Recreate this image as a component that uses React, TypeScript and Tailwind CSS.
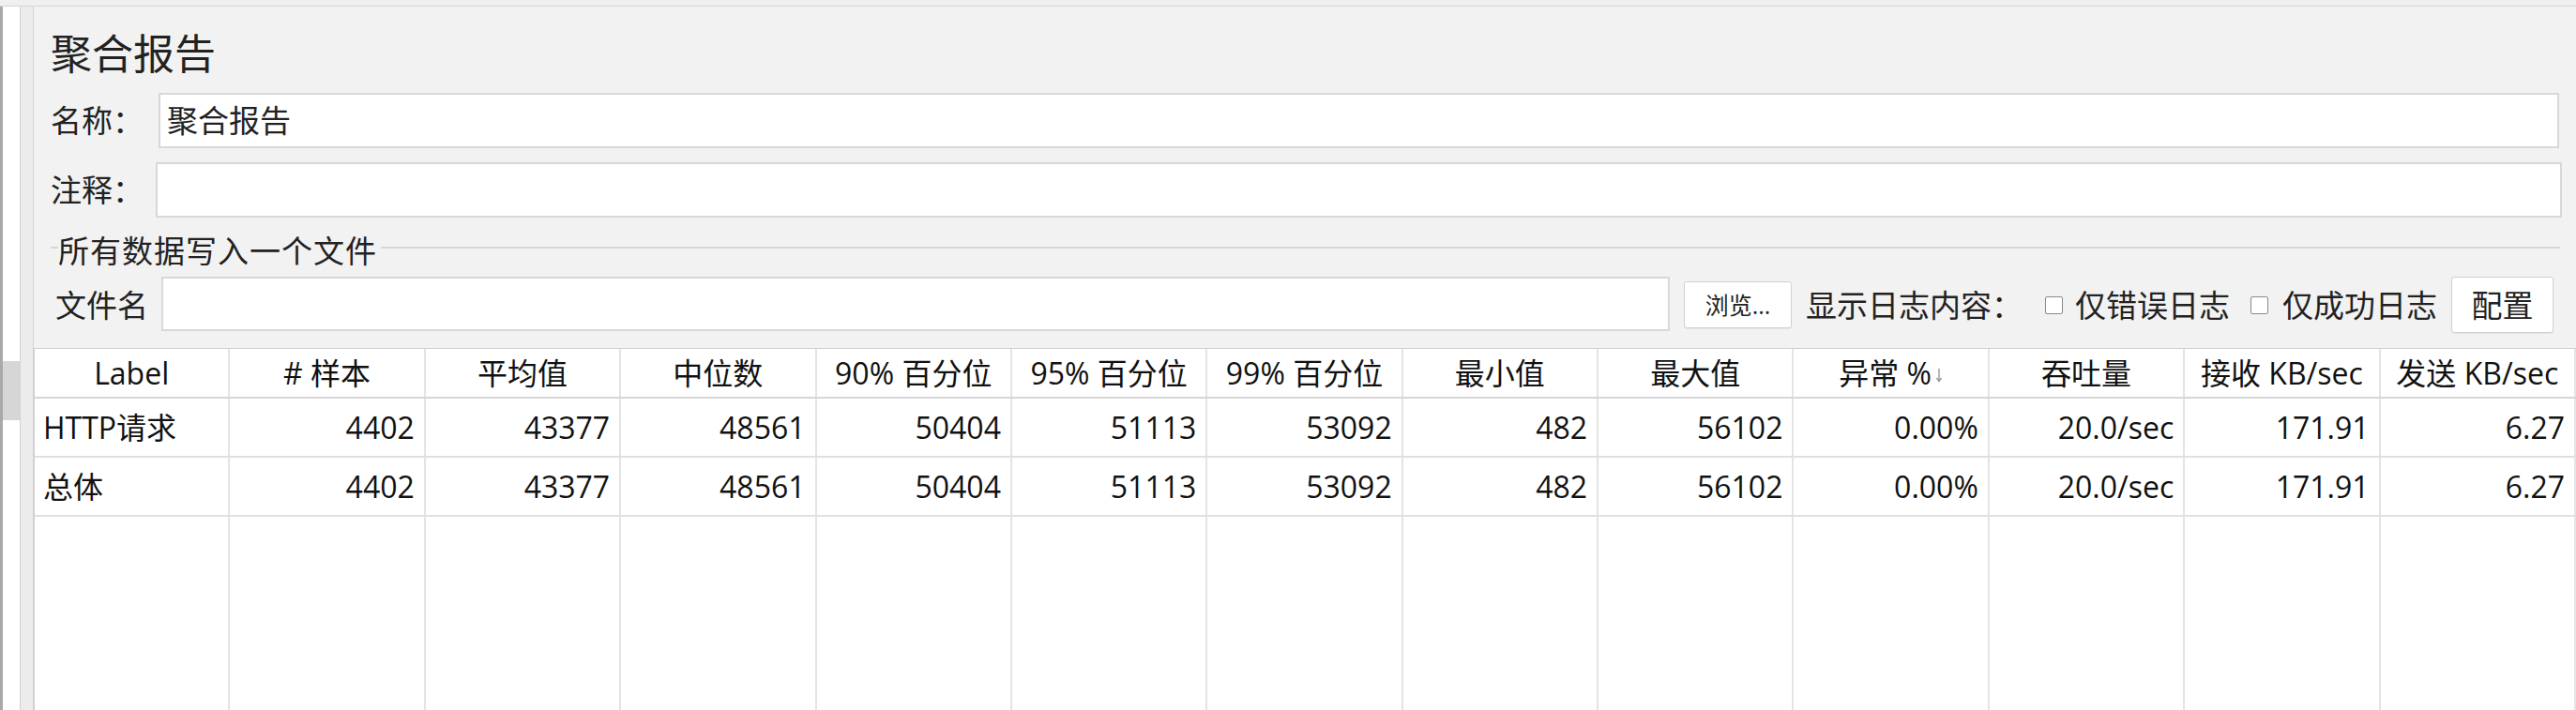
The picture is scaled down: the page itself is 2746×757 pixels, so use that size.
import React from 'react';

const headers = ['Label', '# 样本', '平均值', '中位数', '90% 百分位', '95% 百分位', '99% 百分位', '最小值', '最大值', '异常 %', '吞吐量', '接收 KB/sec', '发送 KB/sec'];

const rows = [
  ['HTTP请求', '4402', '43377', '48561', '50404', '51113', '53092', '482', '56102', '0.00%', '20.0/sec', '171.91', '6.27'],
  ['总体', '4402', '43377', '48561', '50404', '51113', '53092', '482', '56102', '0.00%', '20.0/sec', '171.91', '6.27'],
];

const Checkbox: React.FC = () => (
  <div className="h-[19px] w-[19px] shrink-0 rounded-[2px] border-[1.5px] border-[#8a8a8a] bg-white" />
);

export default function App() {
  return (
    <div className="flex h-[757px] w-[2746px] flex-col overflow-hidden bg-[#f0f0f0] font-['Open_Sans','Noto_Sans_CJK_SC',sans-serif] text-[#222]">
      {/* top edge */}
      <div className="h-[7px] shrink-0 border-b border-[#d4d4d4]" />

      <div className="flex min-h-0 flex-1">
        {/* left tree panel edge + splitter */}
        <div className="w-[3px] shrink-0 bg-[#a9a9a9]" />
        <div className="w-[18px] shrink-0 bg-white pt-[378px]">
          <div className="h-[63px] bg-[#d6d6d6]" />
        </div>
        <div className="w-[15px] shrink-0 border-x border-[#d2d2d2] bg-[#ececec]" />

        {/* main panel */}
        <div className="flex min-w-0 flex-1 flex-col bg-[#f2f2f2]">
          <div className="h-[92px] shrink-0 pl-[18px] pt-[28px] text-[44px] leading-[44px]">聚合报告</div>

          <div className="flex h-[59px] shrink-0 items-center pl-[18px] pr-[18px]">
            <div className="w-[115px] text-[33px] leading-none">名称：</div>
            <div className="flex h-full flex-1 items-center border-2 border-[#d8d8d8] bg-white pl-[7px] text-[33px] leading-none">
              聚合报告
            </div>
          </div>

          <div className="mt-[15px] flex h-[59px] shrink-0 items-center pl-[18px] pr-[15px]">
            <div className="w-[112px] text-[33px] leading-none">注释：</div>
            <div className="h-full flex-1 border-2 border-[#d8d8d8] bg-white" />
          </div>

          <div className="flex h-[63px] shrink-0 items-center pl-[18px] pr-[17px]">
            <div className="h-[2px] w-[8px] bg-[#d6d6d6]" />
            <div className="relative top-[4px] text-[33px] leading-none tracking-[1px]">所有数据写入一个文件</div>
            <div className="ml-[4px] h-[2px] flex-1 bg-[#d6d6d6]" />
          </div>

          <div className="flex h-[60px] shrink-0 items-center pl-[23px]">
            <div className="w-[113px] text-[33px] leading-none">文件名</div>
            <div className="h-[58px] w-[1608px] self-start border-2 border-[#d8d8d8] bg-white" />
            <div className="ml-[15px] flex h-[50px] w-[115px] items-center justify-center rounded-[3px] border-[1.5px] border-[#d0d0d0] bg-white text-[25px] leading-none shadow-[0_1px_1px_rgba(0,0,0,0.06)]">
              浏览...
            </div>
            <div className="ml-[15px] w-[255px] text-[33px] leading-none">显示日志内容：</div>
            <Checkbox />
            <div className="ml-[13px] w-[187px] text-[33px] leading-none">仅错误日志</div>
            <Checkbox />
            <div className="ml-[15px] w-[180px] text-[33px] leading-none">仅成功日志</div>
            <div className="flex h-[60px] w-[109px] items-center justify-center rounded-[3px] border-[1.5px] border-[#d0d0d0] bg-white text-[33px] leading-none shadow-[0_1px_1px_rgba(0,0,0,0.06)]">
              配置
            </div>
          </div>

          {/* results table */}
          <div className="mt-[16px] flex min-h-0 flex-1 flex-col border-l border-t border-[#cfcfcf] bg-white text-[32px] leading-none text-[#111]">
            <div className="grid h-[53px] shrink-0 grid-cols-13 border-b-2 border-[#d6d6d6]">
              {headers.map((h, i) => (
                <div key={h} className="flex items-center justify-center border-r-2 border-[#e4e4e4]">
                  {h}
                  {i === 9 && (
                    <svg width="8" height="16" viewBox="0 0 8 16" className="ml-[4px] mt-[4px]">
                      <path d="M4 1 V14 M1.5 11 L4 14.5 L6.5 11" stroke="#9a9a9a" strokeWidth="1.4" fill="none" />
                    </svg>
                  )}
                </div>
              ))}
            </div>

            {rows.map((r, ri) => (
              <div key={ri} className="grid h-[63px] shrink-0 grid-cols-13 border-b-2 border-[#e0e0e0]">
                {r.map((c, ci) => (
                  <div
                    key={ci}
                    className={
                      ci === 0
                        ? 'flex items-center justify-start border-r-2 border-[#e4e4e4] pl-[9px]'
                        : 'flex items-center justify-end border-r-2 border-[#e4e4e4] pr-[10px]'
                    }
                  >
                    {c}
                  </div>
                ))}
              </div>
            ))}

            <div className="grid min-h-0 flex-1 grid-cols-13">
              {headers.map((h) => (
                <div key={h} className="border-r-2 border-[#e4e4e4]" />
              ))}
            </div>
          </div>
        </div>
      </div>
    </div>
  );
}
